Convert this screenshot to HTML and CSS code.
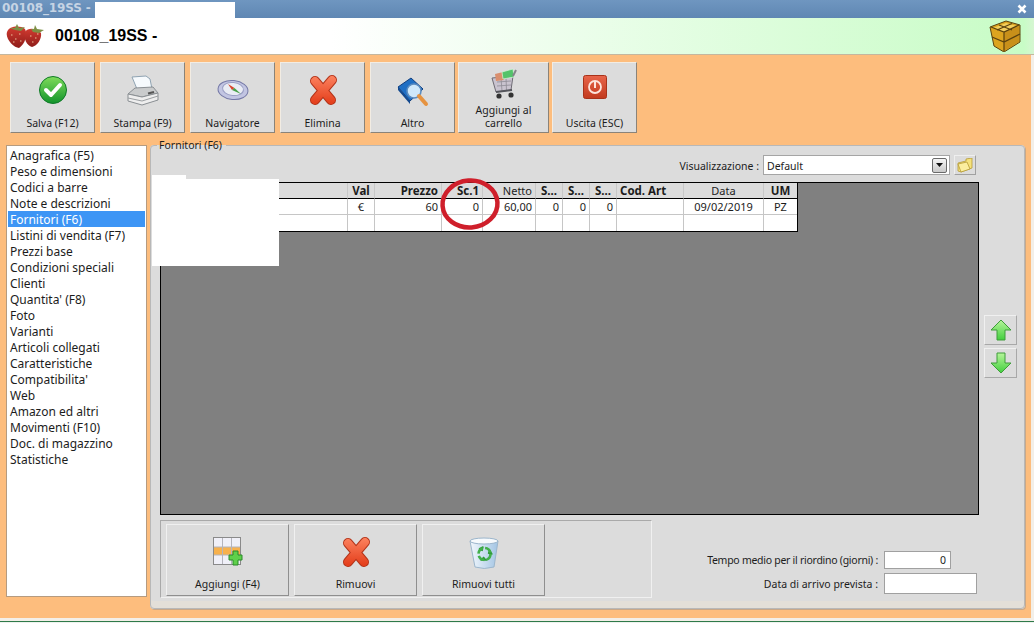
FILE: index.html
```html
<!DOCTYPE html>
<html lang="it">
<head>
<meta charset="utf-8">
<title>00108_19SS</title>
<link rel="stylesheet" href="styles.css">
</head>
<body>
<svg class="defs" width="0" height="0" aria-hidden="true">
  <defs>
    <linearGradient id="gGreen" x1="0" y1="0" x2="0" y2="1"><stop offset="0" stop-color="#7fdc5a"/><stop offset="1" stop-color="#12932c"/></linearGradient>
    <linearGradient id="gRed" x1="0" y1="0" x2="0" y2="1"><stop offset="0" stop-color="#e8654a"/><stop offset="1" stop-color="#c23a1e"/></linearGradient>
    <linearGradient id="gRedX" gradientUnits="userSpaceOnUse" x1="0" y1="2" x2="0" y2="28"><stop offset="0" stop-color="#fb7f5c"/><stop offset="1" stop-color="#e43f1c"/></linearGradient>
    <linearGradient id="gArrow" x1="0" y1="0" x2="0" y2="1"><stop offset="0" stop-color="#b6f59a"/><stop offset="1" stop-color="#43cf3f"/></linearGradient>
    <linearGradient id="gBin" x1="0" y1="0" x2="1" y2="0"><stop offset="0" stop-color="#f2f7fc"/><stop offset="1" stop-color="#a3c5e4"/></linearGradient>
    <linearGradient id="gBerry" x1="0" y1="0" x2="0" y2="1"><stop offset="0" stop-color="#d23a30"/><stop offset="1" stop-color="#8e1d1a"/></linearGradient>
    <symbol id="iconX" viewBox="0 0 30 30">
      <path d="M7 6 L23 25 M24 5 L7 25" fill="none" stroke="#b3341a" stroke-width="10" stroke-linecap="round"/>
      <path d="M7 6 L23 25 M24 5 L7 25" fill="none" stroke="url(#gRedX)" stroke-width="8" stroke-linecap="round"/>
    </symbol>
  </defs>
</svg>

<div class="titlebar">
  <span class="title-text">00108_19SS -</span>
  <span class="title-mask"></span>
  <span class="title-close">
    <svg width="10" height="10" viewBox="0 0 10 10"><path d="M1.5 1.5 L8.5 8.5 M8.5 1.5 L1.5 8.5" stroke="#fff" stroke-width="2.6"/></svg>
  </span>
</div>

<header class="header">
  <svg class="berry" width="38" height="26" viewBox="0 0 38 26">
    <path d="M1 9 C3 3 14 2 19 6 C22 12 19 21 13 25 C8 25 -1 16 1 9 Z" fill="url(#gBerry)"/>
    <path d="M19 9 C22 4 31 5 35 10 C36 16 31 23 26 24 C21 23 17 15 19 9 Z" fill="url(#gBerry)"/>
    <path d="M4 5 L9 5 L11 1 L13 5 L19 4 L15 8 L9 7 Z M25 6 L28 6 L29 2 L31 6 L38 7 L33 10 L27 9 Z" fill="#7d8f45"/>
    <path d="M5 12 h1.5 M9 16 h1.5 M13 11 h1.5 M7 19 h1.5 M14 18 h1.5 M24 13 h1.5 M29 15 h1.5 M26 19 h1.5 M31 11 h1.5" stroke="#ecc09a" stroke-width="1"/>
  </svg>
  <span class="header-title">00108_19SS -</span>
  <svg class="cube" width="32" height="32" viewBox="0 0 32 32">
    <path d="M1 7 L17 1 L31 5 L31 22 L15 32 L5 26 Z" fill="#dca41f" stroke="#5a420f" stroke-width="1"/>
    <path d="M4 8 L17 3 L28 6 L15 12 Z" fill="#f3cf5c"/>
    <path d="M15 12 L15 31 L30 22 L30 6 Z" fill="#c8901a"/>
    <path d="M2 7 L15 12 L30 5 M15 12 V31 M10 5 L23 10 M23 3.5 L8 10 M3 17 L15 22 L31 14" fill="none" stroke="#5a420f" stroke-width="1.2"/>
  </svg>
</header>

<div class="workspace">
  <nav class="toolbar">
    <button class="btn btn-top">
      <svg class="btn-icon" width="30" height="30" viewBox="0 0 30 30"><circle cx="15" cy="15" r="13.5" fill="url(#gGreen)" stroke="#0f7a28"/><path d="M8 15 L13 20 L22 10" fill="none" stroke="#fff" stroke-width="4" stroke-linecap="round" stroke-linejoin="round"/></svg>
      <span class="btn-label">Salva (F12)</span>
    </button>
    <button class="btn btn-top">
      <svg class="btn-icon" width="32" height="32" viewBox="0 0 32 32"><path d="M5 2 L19 1 L23 4 L25 14 L10 14 Z" fill="#f6fafd" stroke="#8fa3b2"/><path d="M1 19 L8 13 L26 12 L31 18 L15 22 Z" fill="#c9cbcc" stroke="#8a8f93"/><path d="M1 19 L15 22 L31 18 L31 25 L15 30 L1 26 Z" fill="#eeeeee" stroke="#8a8f93"/><path d="M1 23 L15 26 L31 21" fill="none" stroke="#9b9fa2"/><path d="M21 18.5 L27 17" stroke="#565656" stroke-width="2"/></svg>
      <span class="btn-label">Stampa (F9)</span>
    </button>
    <button class="btn btn-top">
      <svg class="btn-icon" width="32" height="30" viewBox="0 0 32 30"><ellipse cx="16" cy="15" rx="15" ry="9.5" fill="#c2c5e2" stroke="#7478a6" transform="rotate(6 16 15)"/><ellipse cx="16" cy="14" rx="10.5" ry="6.5" fill="#e9ecf4" stroke="#9a9ec4" transform="rotate(6 16 14)"/><path d="M11 9 L17.5 13 L15 15 Z" fill="#d8452c"/><path d="M17.5 13 L24 19 L15 15 Z" fill="#4aa04a"/></svg>
      <span class="btn-label">Navigatore</span>
    </button>
    <button class="btn btn-top">
      <svg class="btn-icon" width="30" height="30"><use href="#iconX"/></svg>
      <span class="btn-label">Elimina</span>
    </button>
    <button class="btn btn-top">
      <svg class="btn-icon" width="32" height="32" viewBox="0 0 32 32"><path d="M1 12 L14 3 L26 14 L13 26 Z" fill="#1f6fc4" stroke="#123f7e"/><path d="M1 12 L13 26 L13 29 L1 15 Z" fill="#12498f"/><circle cx="17" cy="16" r="7" fill="#cfe8fa" stroke="#5b8cc0" stroke-width="1.6"/><path d="M22 21 L29 29" stroke="#e69340" stroke-width="4" stroke-linecap="round"/></svg>
      <span class="btn-label">Altro</span>
    </button>
    <button class="btn btn-top btn-tight btn-wide">
      <svg class="btn-icon btn-icon-high" width="28" height="32" viewBox="0 0 28 32"><path d="M2 10 L23 8 L21 22 L6 24 Z" fill="#c9c3cf" stroke="#6d6a73"/><path d="M7 14 L21 13 M7 18 L21 17 M11 10 L12 23 M16 9 L16.5 23" stroke="#8f8b96" stroke-width=".8"/><path d="M5 6 L13 4 L14 12 L6 13 Z" fill="#d98f6e"/><path d="M12 4 L23 1 L24 9 L13 11 Z" fill="#53c36a" stroke="#d9f3dc" stroke-width=".7"/><path d="M23 8 L26 2" stroke="#85858a" stroke-width="2"/><circle cx="9" cy="28" r="2.6" fill="#333"/><circle cx="21" cy="27" r="2.6" fill="#333"/><path d="M6 24 L22 22" stroke="#55565c" stroke-width="2"/></svg>
      <span class="btn-label">Aggiungi al<br>carrello</span>
    </button>
    <button class="btn btn-top btn-tight btn-exit">
      <svg class="btn-icon" width="24" height="24" viewBox="0 0 24 24"><rect x=".5" y=".5" width="23" height="23" rx="2" fill="url(#gRed)" stroke="#a8321a"/><circle cx="12" cy="12" r="6" fill="none" stroke="#fde4dc" stroke-width="1.8"/><path d="M12 7 V13" stroke="#fde4dc" stroke-width="2"/></svg>
      <span class="btn-label">Uscita (ESC)</span>
    </button>
  </nav>

  <div class="main">
    <ul class="side">
      <li>Anagrafica (F5)</li>
      <li>Peso e dimensioni</li>
      <li>Codici a barre</li>
      <li>Note e descrizioni</li>
      <li class="side-active">Fornitori (F6)</li>
      <li>Listini di vendita (F7)</li>
      <li>Prezzi base</li>
      <li>Condizioni speciali</li>
      <li>Clienti</li>
      <li>Quantita' (F8)</li>
      <li>Foto</li>
      <li>Varianti</li>
      <li>Articoli collegati</li>
      <li>Caratteristiche</li>
      <li>Compatibilita'</li>
      <li>Web</li>
      <li>Amazon ed altri</li>
      <li>Movimenti (F10)</li>
      <li>Doc. di magazzino</li>
      <li>Statistiche</li>
    </ul>

    <fieldset class="panel">
      <legend class="panel-legend">Fornitori (F6)</legend>
      <div class="panel-body">
        <div class="panel-col">
          <div class="view-row">
            <span class="view-label">Visualizzazione :</span>
            <div class="select">
              <span class="view-label">Default</span>
              <span class="select-arrow"><svg width="7" height="4" viewBox="0 0 7 4"><path d="M0 0 H7 L3.5 4 Z" fill="#111"/></svg></span>
            </div>
            <button class="folder-btn">
              <svg width="16" height="15" viewBox="0 0 16 15"><path d="M1 5 L9 3 L9 1 L15 0 L15 10 L4 14 L1 13 Z" fill="#f5e27c" stroke="#b59b35" stroke-width=".8"/><path d="M1 6 L10 4 L13 11 L4 14 Z" fill="#fbee9f" stroke="#b59b35" stroke-width=".8"/></svg>
            </button>
          </div>

          <div class="grid-box">
            <table class="grid">
              <colgroup>
                <col class="c-name"><col class="c-val"><col class="c-prezzo"><col class="c-sc"><col class="c-netto"><col class="c-s"><col class="c-s"><col class="c-s"><col class="c-cod"><col class="c-data"><col class="c-um">
              </colgroup>
              <thead>
                <tr>
                  <th></th><th class="tc">Val</th><th class="tr">Prezzo</th><th class="tr">Sc.1</th><th class="tr th-plain">Netto</th><th class="tc">S...</th><th class="tc">S...</th><th class="tc">S...</th><th class="tl">Cod. Art</th><th class="tc th-plain">Data</th><th class="tc">UM</th>
                </tr>
              </thead>
              <tbody>
                <tr>
                  <td></td><td class="tc">€</td><td class="tr">60</td><td class="tr">0</td><td class="tr">60,00</td><td class="tr">0</td><td class="tr">0</td><td class="tr">0</td><td></td><td class="tc">09/02/2019</td><td class="tc">PZ</td>
                </tr>
                <tr>
                  <td></td><td></td><td></td><td></td><td></td><td></td><td></td><td></td><td></td><td></td><td></td>
                </tr>
              </tbody>
            </table>
            <svg class="circle-mark" width="64" height="54" viewBox="0 0 64 54"><ellipse cx="32" cy="27" rx="27.5" ry="23.5" fill="none" stroke="#cf1f2b" stroke-width="4.5" transform="rotate(-4 32 27)"/></svg>
          </div>

          <div class="bottom-row">
            <div class="action-group">
              <button class="btn btn-action">
                <svg class="btn-icon" width="30" height="30" viewBox="0 0 30 30"><rect x=".5" y=".5" width="27" height="27" fill="#f0f0f8" stroke="#8a8a8a"/><rect x="1" y="10" width="26" height="8" fill="#f7b14d"/><path d="M9.5 1 V27 M18.5 1 V27 M1 10 H27 M1 18 H27" stroke="#b4b4bc" stroke-width="1"/><path d="M20 14 H25 V18 H29 V23 H25 V28 H20 V23 H16 V18 H20 Z" fill="#5fd04a" stroke="#2b8a2b"/></svg>
                <span class="btn-label">Aggiungi (F4)</span>
              </button>
              <button class="btn btn-action">
                <svg class="btn-icon" width="30" height="30"><use href="#iconX"/></svg>
                <span class="btn-label">Rimuovi</span>
              </button>
              <button class="btn btn-action">
                <svg class="btn-icon" width="30" height="32" viewBox="0 0 30 32"><path d="M1 4 L29 4 L25 30 Q15 33 6 30 Z" fill="url(#gBin)" stroke="#9cb6cc"/><ellipse cx="15" cy="4" rx="14" ry="3" fill="#f7fafd" stroke="#9cb6cc"/><path d="M10 12 L14 10 L13 14 M20 12 L23 17 L19 16 M18 23 L12 23 L15 20" fill="#2f9a3a" stroke="#2f9a3a" stroke-width="1.4" stroke-linejoin="round"/><circle cx="15.5" cy="17" r="6" fill="none" stroke="#42b04a" stroke-width="2.6" stroke-dasharray="7 2.4"/></svg>
                <span class="btn-label">Rimuovi tutti</span>
              </button>
            </div>
            <div class="fields">
              <label class="field-label field-label-tight">Tempo medio per il riordino (giorni) :</label>
              <span class="input input-short">0</span>
              <label class="field-label">Data di arrivo prevista :</label>
              <span class="input input-long"></span>
            </div>
          </div>
        </div>

        <div class="arrows">
          <button class="arrow-btn"><svg width="22" height="22" viewBox="0 0 22 22"><path d="M11 1 L21 11 L15 11 L15 21 L7 21 L7 11 L1 11 Z" fill="url(#gArrow)" stroke="#3f9c3a"/></svg></button>
          <button class="arrow-btn"><svg width="22" height="22" viewBox="0 0 22 22"><path d="M11 21 L21 11 L15 11 L15 1 L7 1 L7 11 L1 11 Z" fill="url(#gArrow)" stroke="#3f9c3a"/></svg></button>
        </div>
      </div>
    </fieldset>
  </div>
</div>

<footer class="footer"></footer>

<div class="mask mask-a"></div>
<div class="mask mask-b"></div>
</body>
</html>
```
FILE: styles.css
```css
* { box-sizing: border-box; }
html, body { margin: 0; padding: 0; height: 623px; overflow: hidden; }
body {
  position: relative;
  display: flex;
  flex-direction: column;
  background: #f3efe8;
  font-family: "Noto Sans", "DejaVu Sans", sans-serif;
  font-size: 10.5px;
  color: #1c1c1c;
}
.defs { position: absolute; }

.titlebar {
  height: 18px;
  flex: none;
  display: flex;
  align-items: flex-end;
  padding-left: 2px;
  background: linear-gradient(#6f96c0, #5f87b3);
  color: #c6d4e4;
  font-family: "DejaVu Sans", sans-serif;
  font-size: 12px;
  font-weight: 700;
  letter-spacing: -.15px;
}
.title-text { width: 93px; line-height: 17px; height: 18px; white-space: nowrap; }
.title-mask { width: 140px; height: 16px; background: #fff; }
.title-close {
  margin-left: auto;
  width: 12px;
  height: 14px;
  margin-right: 6px;
  margin-bottom: 2px;
  display: flex;
  align-items: center;
  justify-content: center;
}

.header {
  height: 37px;
  flex: none;
  display: flex;
  align-items: center;
  padding: 0 13px 0 6px;
  background: linear-gradient(90deg, #fff 0, #fff 32%, #c8fcc6 99%, #d6f6d2 100%);
  border-bottom: 1px solid #c4b79f;
}
.berry { flex: none; }
.header-title {
  margin-left: 11px;
  font-family: "Liberation Sans", Arial, sans-serif;
  font-size: 16px;
  font-weight: 700;
  color: #000;
}
.cube { margin-left: auto; }

.workspace {
  flex: 1;
  display: flex;
  flex-direction: column;
  background: #fdbd7d;
  margin-right: 3px;
  padding: 7px 0 8px;
  min-height: 0;
}

.toolbar {
  display: flex;
  gap: 5px;
  padding-left: 10px;
  height: 71px;
  flex: none;
}

.btn {
  display: flex;
  flex-direction: column;
  align-items: center;
  padding: 0;
  background: #dcdcdc;
  border: 1px solid;
  border-color: #f2ece3 #8b8378 #8b8378 #f2ece3;
  font: inherit;
  color: inherit;
  line-height: 13px;
}
.btn-top { width: 85px; padding-top: 12px; }
.btn-wide { width: 91px; padding-top: 5px; }
.btn-exit { width: 85px; }
.btn-tight { margin-left: -2px; }
.btn-icon { flex: none; }
.btn-icon-high { margin-bottom: -4px; }
.btn-label { margin-top: auto; padding-bottom: 2px; text-align: center; }

.main {
  flex: 1;
  display: flex;
  gap: 3px;
  padding-left: 6px;
  margin-top: 5px;
  min-height: 0;
}

.side {
  list-style: none;
  width: 141px;
  height: 452px;
  flex: none;
  margin: 7px 0 0;
  padding: 1px 1px 0;
  background: #fff;
  border: 1px solid #b59b80;
  font-size: 12px;
}
.side li { height: 16px; line-height: 18px; padding-left: 2px; color: #1c1c1c; white-space: nowrap; }
.side li.side-active { background: #3d95f5; color: #fff; }

.panel {
  width: 875px;
  height: 471px;
  margin: 0;
  padding: 1px 6px 0 9px;
  background: #dcdcdc;
  border: 1px solid #b8b8b8;
  border-radius: 4px;
  box-shadow: 0 -7px 0 #e3dfd8 inset, 1px 1px 0 #c9a888;
  min-width: 0;
}
.panel-legend { margin-left: -3px; padding: 0 4px 0 2px; line-height: 14px; font-size: 10.5px; }
.panel-body { display: flex; gap: 5px; }
.panel-col { width: 819px; flex: none; display: flex; flex-direction: column; }

.view-row {
  height: 20px;
  display: flex;
  align-items: center;
  justify-content: flex-end;
  gap: 4px;
  padding-right: 3px;
  margin-top: 2px;
}
.view-label { padding-top: 2px; }
.select {
  width: 187px;
  height: 20px;
  display: flex;
  align-items: center;
  justify-content: space-between;
  padding: 0 2px 0 3px;
  background: #fff;
  border: 1px solid #a5a5a5;
}
.select-arrow {
  width: 15px;
  height: 15px;
  display: flex;
  align-items: center;
  justify-content: center;
  background: linear-gradient(#f5f5f5, #c9c9c9);
  border: 1px solid #6a6a6a;
  border-radius: 2px;
}
.folder-btn {
  width: 22px;
  height: 20px;
  padding: 0;
  display: flex;
  align-items: center;
  justify-content: center;
  background: #dcdcdc;
  border: 1px solid;
  border-color: #efefef #a0a0a0 #a0a0a0 #efefef;
}

.grid-box {
  position: relative;
  height: 333px;
  margin-top: 7px;
  background: #808080;
  border: 1px solid #000;
}
.grid {
  table-layout: fixed;
  width: 636px;
  border-collapse: separate;
  border-spacing: 0;
  background: #fff;
  border-right: 1px solid #000;
  border-bottom: 1px solid #000;
  font-size: 11px;
}
.c-name { width: 187px; }
.c-val { width: 27px; }
.c-prezzo { width: 67px; }
.c-sc { width: 41px; }
.c-netto { width: 53px; }
.c-s { width: 27px; }
.c-cod { width: 67px; }
.c-data { width: 80px; }
.c-um { width: 33px; }
.grid th, .grid td {
  height: 16px;
  padding: 0 3px;
  line-height: 14px;
  border-right: 1px solid #c6c6c6;
  border-bottom: 1px solid #c6c6c6;
  overflow: hidden;
  white-space: nowrap;
}
.grid th {
  background: #dcdcdc;
  font-size: 11.5px;
  font-weight: 700;
  border-bottom-color: #000;
  border-right-color: #c8c8c8;
}
.grid th.th-plain { font-weight: 400; font-size: 11px; }
.grid tbody tr:last-child td { height: 16px; border-bottom: 0; }
.grid th:last-child, .grid td:last-child { border-right: 0; }
.tc { text-align: center; }
.tr { text-align: right; }
.tl { text-align: left; }
.circle-mark { position: absolute; left: 277px; top: -6px; pointer-events: none; }

.bottom-row { display: flex; height: 78px; margin-top: 5px; }
.action-group {
  width: 492px;
  height: 78px;
  display: flex;
  gap: 5px;
  padding: 3px 5px;
  border: 1px solid;
  border-color: #a9a9a9 #f0f0f0 #f0f0f0 #a9a9a9;
}
.btn-action {
  width: 123px;
  height: 72px;
  padding-top: 12px;
  border-color: #f0f0f0 #8f8f8f #8f8f8f #f0f0f0;
}
.btn-action .btn-label { padding-bottom: 4px; }

.fields {
  margin-left: auto;
  margin-right: 2px;
  align-self: flex-end;
  display: grid;
  grid-template-columns: auto 93px;
  column-gap: 6px;
  row-gap: 4px;
  align-items: center;
  padding-bottom: 4px;
}
.field-label { text-align: right; white-space: nowrap; }
.field-label-tight { letter-spacing: -.27px; }
.input {
  display: block;
  padding: 0 4px;
  background: #fff;
  border: 1px solid #a0a0a0;
  text-align: right;
}
.input-short { width: 67px; height: 18px; line-height: 16px; }
.input-long { width: 93px; height: 21px; }

.arrows { display: flex; flex-direction: column; gap: 3px; align-self: flex-start; margin-top: 162px; }
.arrow-btn {
  width: 33px;
  height: 30px;
  padding: 0;
  display: flex;
  align-items: center;
  justify-content: center;
  background: #dcdcdc;
  border: 1px solid;
  border-color: #f0f0f0 #a8a8a8 #a8a8a8 #f0f0f0;
}

.footer {
  height: 5px;
  flex: none;
  background: linear-gradient(#f3efe8 0, #f3efe8 3px, #2f7a4a 3px, #2f7a4a 4px, #eef3ee 4px);
}

.mask { position: absolute; background: #fff; }
.mask-a { left: 152px; top: 179px; width: 127px; height: 87px; }
.mask-b { left: 152px; top: 175px; width: 34px; height: 4px; }
```
